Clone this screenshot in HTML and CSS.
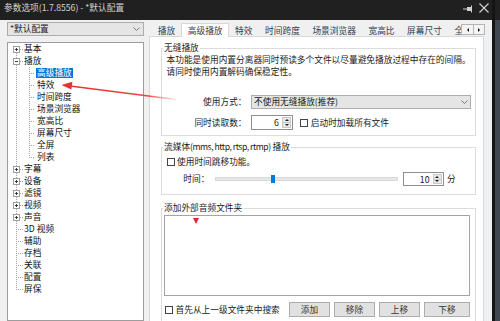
FILE: index.html
```html
<!DOCTYPE html>
<html lang="zh-CN">
<head>
<meta charset="utf-8">
<title>参数选项</title>
<link rel="stylesheet" href="styles.css">
</head>
<body>
<div class="screen">
  <div class="window">
    <div class="titlebar">
      <span class="title">参数选项(1.7.8556) - *默认配置</span>
      <span class="tb-icons">
        <svg class="pin" width="11" height="8" viewBox="0 0 11 8"><path d="M0 4H4" stroke="#cfcfcf" stroke-width="1"/><rect x="4" y="2" width="4" height="4" fill="#cfcfcf"/><path d="M8.5 0.5V7.5" stroke="#cfcfcf" stroke-width="1"/></svg>
        <svg class="close" width="10" height="10" viewBox="0 0 10 10"><path d="M0.5 0.5L9.5 9.5M9.5 0.5L0.5 9.5" stroke="#d6d6d6" stroke-width="1.1"/></svg>
      </span>
    </div>
    <div class="content">
      <div class="left">
        <div class="combo"><span>*默认配置</span><svg class="chev" width="7" height="4" viewBox="0 0 7 4"><path d="M0.5 0.5L3.5 3.5L6.5 0.5" fill="none" stroke="#7a7a7a"/></svg></div>
        <div class="tree">
          <div class="node first"><span class="g"><i class="box plus"></i></span><span class="lbl">基本</span></div>
          <div class="node"><span class="g"><i class="box minus"></i></span><span class="lbl">播放</span></div>
          <div class="node child"><span class="g"></span><span class="g2"></span><span class="lbl sel">高级播放</span></div>
          <div class="node child"><span class="g"></span><span class="g2"></span><span class="lbl">特效</span></div>
          <div class="node child"><span class="g"></span><span class="g2"></span><span class="lbl">时间跨度</span></div>
          <div class="node child"><span class="g"></span><span class="g2"></span><span class="lbl">场景浏览器</span></div>
          <div class="node child"><span class="g"></span><span class="g2"></span><span class="lbl">宽高比</span></div>
          <div class="node child"><span class="g"></span><span class="g2"></span><span class="lbl">屏幕尺寸</span></div>
          <div class="node child"><span class="g"></span><span class="g2"></span><span class="lbl">全屏</span></div>
          <div class="node child lastchild"><span class="g"></span><span class="g2"></span><span class="lbl">列表</span></div>
          <div class="node"><span class="g"><i class="box plus"></i></span><span class="lbl">字幕</span></div>
          <div class="node"><span class="g"><i class="box plus"></i></span><span class="lbl">设备</span></div>
          <div class="node"><span class="g"><i class="box plus"></i></span><span class="lbl">滤镜</span></div>
          <div class="node"><span class="g"><i class="box plus"></i></span><span class="lbl">视频</span></div>
          <div class="node"><span class="g"><i class="box plus"></i></span><span class="lbl">声音</span></div>
          <div class="node"><span class="g"></span><span class="lbl">3D 视频</span></div>
          <div class="node"><span class="g"></span><span class="lbl">辅助</span></div>
          <div class="node"><span class="g"></span><span class="lbl">存档</span></div>
          <div class="node"><span class="g"></span><span class="lbl">关联</span></div>
          <div class="node"><span class="g"></span><span class="lbl">配置</span></div>
          <div class="node last"><span class="g"></span><span class="lbl">屏保</span></div>
        </div>
      </div>
      <div class="right">
        <div class="tabstrip">
          <div class="tablist">
            <span class="tab">播放</span>
            <span class="tab active">高级播放</span>
            <span class="tab">特效</span>
            <span class="tab">时间跨度</span>
            <span class="tab">场景浏览器</span>
            <span class="tab">宽高比</span>
            <span class="tab">屏幕尺寸</span>
            <span class="tab">全屏</span>
          </div>
          <div class="scroller"><span class="sbtn"><i class="tri-l"></i></span><span class="sbtn"><i class="tri-r"></i></span></div>
        </div>
        <div class="panel">
          <fieldset class="group g-seamless">
            <legend>无缝播放</legend>
            <p class="desc">本功能是使用内置分离器同时预读多个文件以尽量避免播放过程中存在的间隔。<br>请同时使用内置解码确保稳定性。</p>
            <div class="form">
              <span class="flabel">使用方式：</span>
              <div class="combo wide"><span>不使用无缝播放(推荐)</span><svg class="chev" width="7" height="4" viewBox="0 0 7 4"><path d="M0.5 0.5L3.5 3.5L6.5 0.5" fill="none" stroke="#7a7a7a"/></svg></div>
              <span class="flabel">同时读取数：</span>
              <div class="spinrow">
                <span class="spin s-count"><span class="val">6</span><span class="arrows"><i class="up"></i><i class="dn"></i></span></span>
                <span class="check"><span class="cb"></span>启动时加载所有文件</span>
              </div>
            </div>
          </fieldset>
          <fieldset class="group g-stream">
            <legend>流媒体<span class="latin">(mms, http, rtsp, rtmp)</span> 播放</legend>
            <span class="check c-seek"><span class="cb"></span>使用时间跳移功能。</span>
            <div class="timerow">
              <span class="tlabel">时间：</span>
              <div class="slider"><span class="thumb" style="left: 30.6%"></span></div>
              <span class="spin s-time"><span class="val">10</span><span class="arrows"><i class="up"></i><i class="dn"></i></span></span>
              <span class="unit">分</span>
            </div>
          </fieldset>
          <fieldset class="group g-audio">
            <legend>添加外部音频文件夹</legend>
            <div class="listbox"><span class="marker"></span></div>
            <div class="bottomrow">
              <span class="check"><span class="cb"></span>首先从上一级文件夹中搜索</span>
              <div class="buttons">
                <span class="btn">添加</span>
                <span class="btn">移除</span>
                <span class="btn">上移</span>
                <span class="btn wide-btn">下移</span>
              </div>
            </div>
          </fieldset>
        </div>
      </div>
    </div>
  </div>
  <div class="edge"></div>
  <div class="desktop"></div>
  <svg class="annot" width="500" height="321" viewBox="0 0 500 321">
    <defs>
      <linearGradient id="fade" x1="62" y1="0" x2="176" y2="0" gradientUnits="userSpaceOnUse">
        <stop offset="0" stop-color="#e5322c"/>
        <stop offset="0.75" stop-color="#e8453f"/>
        <stop offset="1" stop-color="#f2a09b" stop-opacity="0.3"/>
      </linearGradient>
    </defs>
    <line x1="70" y1="86" x2="176" y2="99.5" stroke="url(#fade)" stroke-width="1.3"/>
    <polygon points="61.5,85 72.4,81.8 71.4,89.4" fill="#e5322c"/>
  </svg>
</div>
</body>
</html>
```

FILE: styles.css
```css
* { box-sizing: border-box; }
html, body { margin: 0; padding: 0; }
body {
  width: 500px;
  height: 321px;
  overflow: hidden;
  background: #2b3036;
  font-family: "Noto Sans CJK SC", "Noto Sans", sans-serif;
  font-size: 8.7px;
  color: #1a1a1a;
  --vdot: repeating-linear-gradient(to bottom, #a3a3a3 0 1px, transparent 1px 2px);
  --hdot: repeating-linear-gradient(to right, #a3a3a3 0 1px, transparent 1px 2px);
}
.screen { display: flex; width: 500px; height: 321px; position: relative; overflow: hidden; }
.window { width: 492px; flex: none; background: #f0f0f0; display: flex; flex-direction: column; overflow: hidden; }
.edge { width: 3px; flex: none; background: #151515; }
.desktop { flex: 1; background: linear-gradient(#202020 0 20px, #3f4750 20px); }
.annot { position: absolute; left: 0; top: 0; pointer-events: none; }

/* title bar */
.titlebar {
  height: 20px; flex: none;
  background: #202020; color: #d2d2d2;
  display: flex; justify-content: space-between; align-items: flex-start;
  padding: 2px 3px 0 4px; line-height: 12px;
}
.tb-icons { display: flex; align-items: center; gap: 5px; padding-top: 1px; }
.pin { margin-top: 1px; }

/* content */
.content { flex: 1; min-height: 0; display: flex; gap: 5px; padding: 2px 8px 0 7px; }
.left { width: 137px; flex: none; display: flex; flex-direction: column; }
.right { width: 335px; flex: none; display: flex; flex-direction: column; margin-bottom: -20px; }

.combo {
  height: 14px; flex: none;
  border: 1px solid #adadad; background: #e5e5e5;
  display: flex; align-items: center; justify-content: space-between;
  padding: 0 3px 0 2px; line-height: 12px; white-space: nowrap;
}
.chev { flex: none; }

/* tree */
.tree { flex: 1; margin-top: 6px; background: #fff; border: 1px solid #9d9d9d; }
.node { display: flex; height: 12px; line-height: 12px; white-space: nowrap; color: #111; }
.g {
  width: 15px; height: 12px; flex: none; display: flex; align-items: flex-start;
  background: var(--vdot) 8px 0 / 1px 12px no-repeat, var(--hdot) 8px 6px / 7px 1px no-repeat;
}
.first .g { background: var(--vdot) 8px 6px / 1px 6px no-repeat, var(--hdot) 8px 6px / 7px 1px no-repeat; }
.last .g { background: var(--vdot) 8px 0 / 1px 7px no-repeat, var(--hdot) 8px 6px / 7px 1px no-repeat; }
.child .g { background: var(--vdot) 8px 0 / 1px 12px no-repeat; }
.g2 {
  width: 13px; height: 12px; flex: none;
  background: var(--vdot) 6px 0 / 1px 12px no-repeat, var(--hdot) 6px 6px / 6px 1px no-repeat;
}
.lastchild .g2 { background: var(--vdot) 6px 0 / 1px 7px no-repeat, var(--hdot) 6px 6px / 6px 1px no-repeat; }
.box { display: block; width: 7px; height: 7px; margin: 3px 0 0 5px; border: 1px solid #a0a0a0; background: #fff; }
.box.plus {
  background:
    linear-gradient(#3a3a3a, #3a3a3a) 1px 2px / 3px 1px no-repeat,
    linear-gradient(#3a3a3a, #3a3a3a) 2px 1px / 1px 3px no-repeat,
    #fff;
}
.box.minus { background: linear-gradient(#3a3a3a, #3a3a3a) 1px 2px / 3px 1px no-repeat, #fff; }
.lbl { padding: 0 1px; }
.lbl.sel { background: #0078d7; color: #fff; line-height: 10px; height: 10px; margin-top: 1px; }

/* tabs */
.tabstrip { height: 14px; flex: none; display: flex; align-items: flex-end; position: relative; z-index: 1; }
.tablist { flex: 1; min-width: 0; display: flex; align-items: flex-end; overflow-x: clip; padding-left: 2.5px; }
.tab { flex: none; height: 11px; line-height: 11px; padding: 0 6.3px; color: #2f3e56; white-space: nowrap; }
.tab.active {
  height: 14px; margin-bottom: -1px; padding: 1px 5.3px 0;
  background: #fff; border: 1px solid #d9d9d9; border-bottom: 0;
}
.scroller { flex: none; display: flex; margin: 0 -1px 1px 0; border: 1px solid #b5b5b5; background: #f4f4f4; }
.sbtn { width: 11px; height: 9px; display: flex; align-items: center; justify-content: center; }
.sbtn + .sbtn { border-left: 1px solid #b5b5b5; }
.tri-l { width: 0; height: 0; border-top: 2px solid transparent; border-bottom: 2px solid transparent; border-right: 2px solid #111; }
.tri-r { width: 0; height: 0; border-top: 2px solid transparent; border-bottom: 2px solid transparent; border-left: 2px solid #111; }

/* panel */
.panel {
  flex: 1; background: #fff; border: 1px solid #d9d9d9;
  padding: 5px 7px 0 11px;
  display: flex; flex-direction: column;
}
.group { margin: 0; padding: 0; border: 1px solid #dcdcdc; min-width: 0; flex: none; }
.group legend { padding: 0 1px; margin-left: 1px; line-height: 12px; color: #1a1a1a; white-space: nowrap; }
.latin { letter-spacing: -0.5px; }

.desc { margin: 0; padding-left: 4.5px; line-height: 11.7px; white-space: nowrap; color: #1a1a1a; }
.form {
  display: grid; grid-template-columns: 84.5px 220px;
  column-gap: 4.5px; row-gap: 6px; align-items: center;
  margin-top: 17.6px; padding-bottom: 5px;
}
.flabel { text-align: right; white-space: nowrap; line-height: 12px; }
.combo.wide { padding-left: 2px; padding-right: 2px; }
.spinrow { display: flex; align-items: center; height: 15px; }

.spin { display: flex; border: 1px solid #8e8e8e; background: #fff; padding: 1px; flex: none; }
.s-count { width: 42.3px; height: 15px; }
.s-time { width: 41px; height: 14px; margin-left: 5px; }
.val { flex: 1; text-align: right; padding-right: 3.5px; line-height: 11px; }
.arrows { width: 9px; display: flex; flex-direction: column; }
.arrows i { flex: 1; display: flex; align-items: center; justify-content: center; background: #e8e8e8; border: 1px solid #c8c8c8; }
.arrows i + i { border-top: 0; }
.up::after { content: ""; border-left: 2px solid transparent; border-right: 2px solid transparent; border-bottom: 2px solid #222; }
.dn::after { content: ""; border-left: 2px solid transparent; border-right: 2px solid transparent; border-top: 2px solid #222; }

.check { display: flex; align-items: center; gap: 2.5px; white-space: nowrap; line-height: 12px; }
.spinrow .check { margin-left: 7px; }
.cb { width: 8px; height: 8px; flex: none; border: 1px solid #444; background: #fff; }

/* stream group */
.g-stream { margin-top: 5px; }
.c-seek { margin-top: 3px; padding-left: 4.5px; height: 12px; }
.timerow { display: flex; align-items: center; height: 14px; margin-top: 4px; margin-bottom: 8px; padding-left: 21.3px; }
.tlabel { width: 31.7px; flex: none; line-height: 12px; }
.slider { position: relative; width: 183px; height: 4px; flex: none; background: #e7e7e7; border: 1px solid #d8d8d8; }
.thumb { position: absolute; top: -3px; width: 4px; height: 8px; background: #0078d7; }
.unit { margin-left: 3px; line-height: 12px; }

/* audio group */
.g-audio { margin-top: 7px; }
.listbox { position: relative; height: 81px; margin: 1px 5px 0 2px; border: 1px solid #a3a3a3; background: #fff; }
.marker {
  position: absolute; left: 27.5px; top: 2.3px; width: 0; height: 0;
  border-left: 3.5px solid transparent; border-right: 3.5px solid transparent; border-top: 6.5px solid #e3262d;
}
.bottomrow { display: flex; align-items: center; height: 15px; margin-top: 6px; padding: 0 5px 20px 3px; box-sizing: content-box; }
.buttons { margin-left: auto; display: flex; gap: 4px; }
.btn {
  width: 41px; height: 15px; display: flex; align-items: center; justify-content: center;
  background: #e1e1e1; border: 1px solid #adadad; color: #333; line-height: 12px;
}
.wide-btn { width: 46px; }
```
